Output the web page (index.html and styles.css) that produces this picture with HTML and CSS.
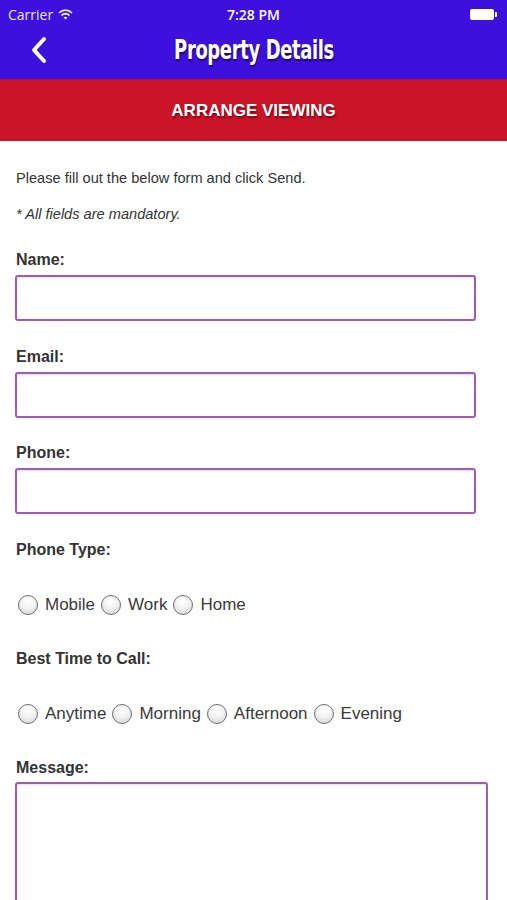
FILE: index.html
```html
<!DOCTYPE html>
<html>
	<head>
		<title>Property Details</title>
		<meta name="viewport" content="width=device-width, initial-scale=1">
		<link rel="stylesheet" href="styles.css">
	</head>
	<body>
		<header class="topbar">
			<div class="status">
				<span class="carrier">Carrier
					<svg class="wifi" width="15" height="11" viewBox="0 0 15 11">
						<path d="M1 4 A9 9 0 0 1 14 4" fill="none" stroke="#fff" stroke-width="1.8"/>
						<path d="M3.5 6.5 A5.5 5.5 0 0 1 11.5 6.5" fill="none" stroke="#fff" stroke-width="1.8"/>
						<path d="M5.5 8.6 L7.5 10.6 L9.5 8.6 A3 3 0 0 0 5.5 8.6 Z" fill="#fff"/>
					</svg>
				</span>
				<span class="time">7:28 PM</span>
				<span class="battery"><i></i></span>
			</div>
			<nav class="navbar">
				<svg class="back" width="20" height="28" viewBox="0 0 20 28">
					<path d="M15 3 L5 14 L15 25" fill="none" stroke="#fff" stroke-width="4" stroke-linecap="round" stroke-linejoin="round"/>
				</svg>
				<h1>Property Details</h1>
			</nav>
		</header>
		<div class="banner">ARRANGE VIEWING</div>
		<main class="content">
			<p class="intro">Please fill out the below form and click Send.</p>
			<p class="note">* All fields are mandatory.</p>
			<form>
				<label class="field">Name:
					<input type="text" class="box">
				</label>
				<label class="field">Email:
					<input type="text" class="box">
				</label>
				<label class="field">Phone:
					<input type="text" class="box">
				</label>
				<div class="group">
					<div class="label">Phone Type:</div>
					<div class="radios">
						<label><span class="dot"></span>Mobile</label>
						<label><span class="dot"></span>Work</label>
						<label><span class="dot"></span>Home</label>
					</div>
				</div>
				<div class="group">
					<div class="label">Best Time to Call:</div>
					<div class="radios">
						<label><span class="dot"></span>Anytime</label>
						<label><span class="dot"></span>Morning</label>
						<label><span class="dot"></span>Afternoon</label>
						<label><span class="dot"></span>Evening</label>
					</div>
				</div>
				<label class="field">Message:
					<textarea class="box message"></textarea>
				</label>
			</form>
		</main>
	</body>
</html>
```

FILE: styles.css
```css
html, body {
	margin: 0;
	padding: 0;
	background: #fff;
	font-family: "Liberation Sans", Arial, sans-serif;
	overflow: hidden;
}
.topbar {
	background: #3d10de;
	color: #fff;
	height: 79px;
}
.status {
	height: 28px;
	display: flex;
	align-items: center;
	justify-content: space-between;
	padding: 0 10px 0 8px;
	font-family: "Open Sans", "Liberation Sans", sans-serif;
	font-size: 14px;
	position: relative;
}
.carrier {
	display: flex;
	align-items: center;
	gap: 5px;
	opacity: .9;
}
.time {
	position: absolute;
	left: 0;
	right: 0;
	text-align: center;
	font-weight: 600;
}
.battery {
	width: 24px;
	height: 11px;
	background: #fff;
	border-radius: 2px;
	position: relative;
	margin-right: 3px;
}
.battery i {
	position: absolute;
	right: -3px;
	top: 3px;
	width: 2px;
	height: 5px;
	background: #fff;
	border-radius: 0 1px 1px 0;
}
.navbar {
	height: 51px;
	display: flex;
	align-items: center;
	justify-content: center;
	position: relative;
}
.back {
	position: absolute;
	left: 29px;
	top: 8px;
}
.navbar h1 {
	margin: -8px 0 0;
	font-family: "DejaVu Sans Condensed", "DejaVu Sans", sans-serif;
	font-stretch: condensed;
	font-weight: bold;
	font-size: 27px;
	letter-spacing: -0.5px;
	text-shadow: 1px 2px 2px rgba(0, 0, 0, .55);
	transform: scaleX(.74);
}
.banner {
	background: #cc1429;
	color: #fff;
	height: 61px;
	line-height: 61px;
	text-align: center;
	font-weight: bold;
	font-size: 17px;
	text-shadow: 1px 2px 2px rgba(0, 0, 0, .45);
	border-top: 1px solid #a3106a;
}
.content {
	padding: 27px 16px 0 16px;
	color: #333;
}
.intro {
	margin: 0;
	font-size: 14.6px;
	line-height: 20px;
}
.note {
	margin: 16px 0 0;
	font-size: 14.6px;
	line-height: 20px;
	font-style: italic;
}
form {
	margin-top: 26px;
}
.field, .group {
	display: block;
	font-weight: bold;
	font-size: 16px;
	line-height: 20px;
	margin-bottom: 25.5px;
}
.box {
	display: block;
	box-sizing: border-box;
	width: 461px;
	height: 46px;
	margin: 5px 0 0 -1px;
	border: 2px solid #9f5ab3;
	border-radius: 3px;
	background: #fff;
	box-shadow: inset 0 1px 2px rgba(0, 0, 0, .12);
	font: inherit;
	font-weight: normal;
}
.message {
	width: 473px;
	height: 140px;
	margin-top: 4px;
	resize: none;
}
.radios {
	display: flex;
	align-items: center;
	margin-top: 35px;
	margin-left: 2px;
	font-weight: normal;
	font-size: 17px;
	color: #3a3a3a;
	margin-bottom: 34px;
}
.radios label {
	display: flex;
	align-items: center;
}
.dot {
	width: 20px;
	height: 20px;
	box-sizing: border-box;
	border-radius: 50%;
	border: 1px solid #6e6e6e;
	background: radial-gradient(circle at 50% 30%, #fff 0%, #f2f2f2 45%, #cfcfcf 100%);
	margin-right: 7px;
	margin-left: 0;
}
.radios label + label .dot {
	margin-left: 6px;
}
```
